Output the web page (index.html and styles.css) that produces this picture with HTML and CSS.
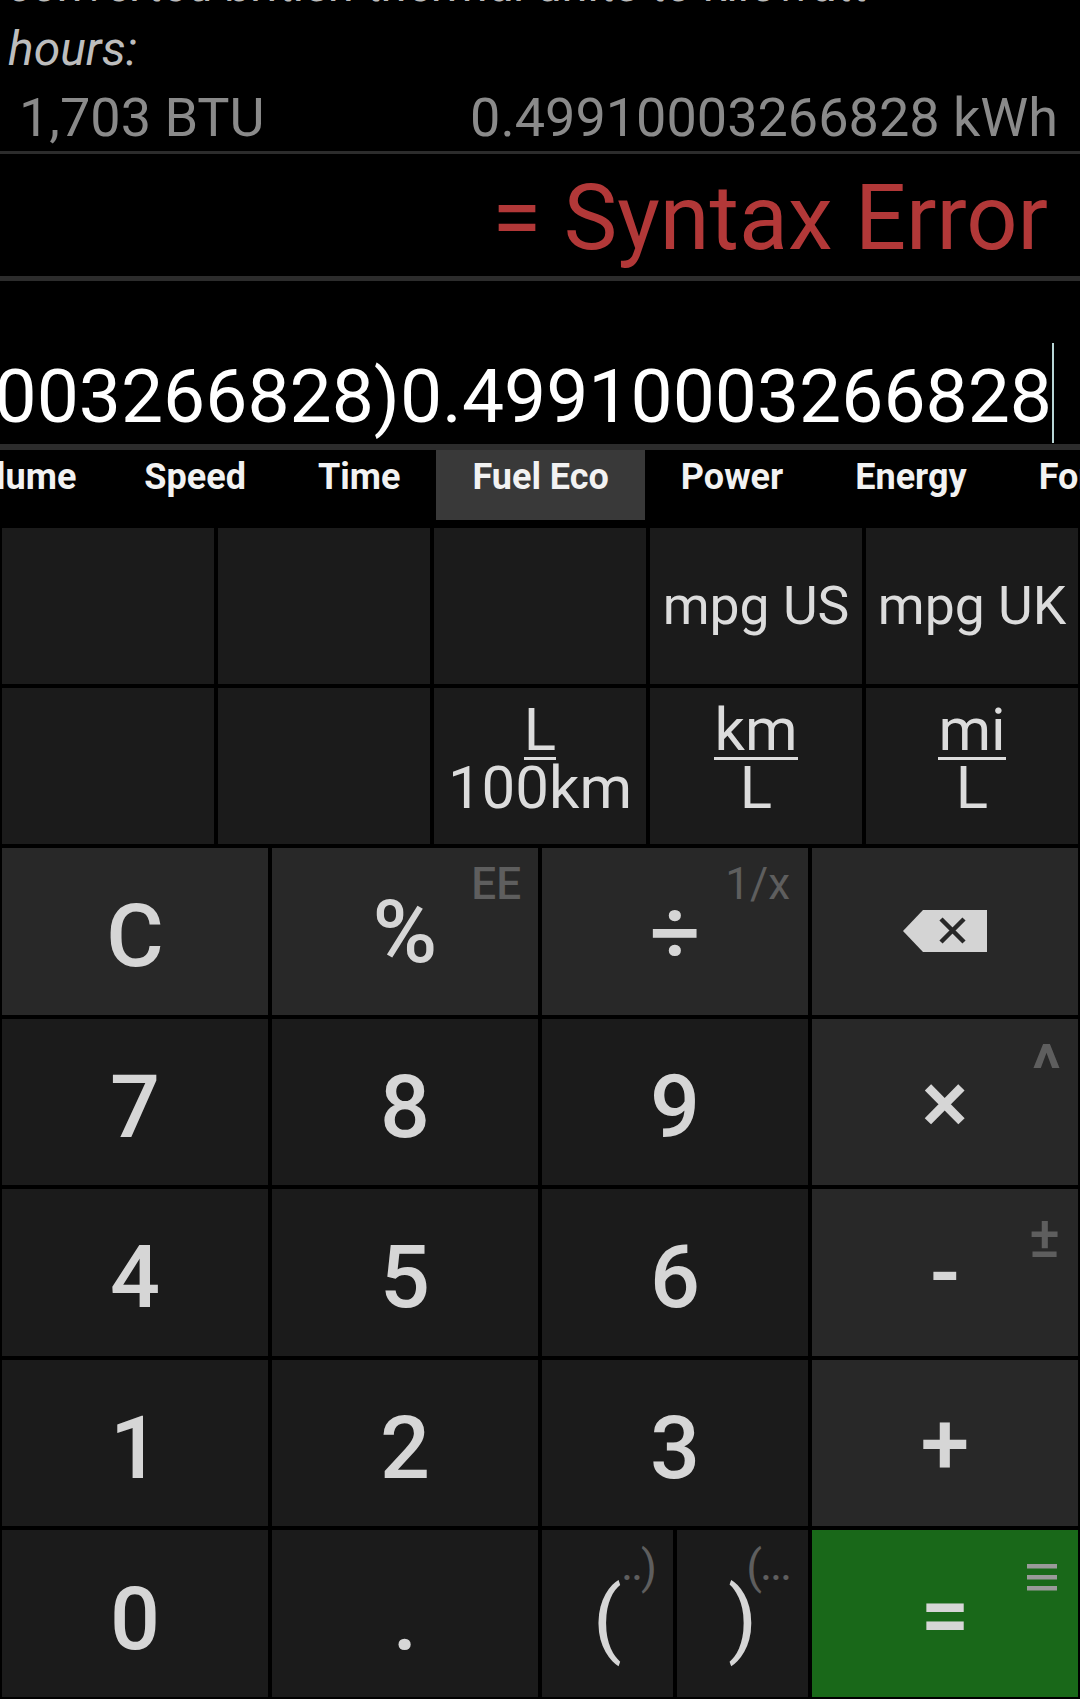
FILE: index.html
```html
<!DOCTYPE html>
<html lang="en">
<head>
<meta charset="utf-8">
<title>Calculator</title>
<link rel="stylesheet" href="styles.css">
</head>
<body>
<div class="app">
  <section class="history">
    <div class="desc">converted british thermal units to kilowatt<br>hours:</div>
    <div class="conv"><span>1,703 BTU</span><span>0.49910003266828 kWh</span></div>
  </section>

  <section class="result"><span class="error">= Syntax Error</span></section>

  <section class="expr">
    <span class="expr-text">1703*0.00029307107017)0.49910003266828)0.49910003266828</span><span class="cursor"></span>
  </section>

  <nav class="tabs">
    <div class="tab tab-first">Volume</div>
    <div class="tab">Speed</div>
    <div class="tab">Time</div>
    <div class="tab tab-active">Fuel Eco</div>
    <div class="tab">Power</div>
    <div class="tab">Energy</div>
    <div class="tab">Force</div>
    <div class="tab">Pressure</div>
  </nav>

  <section class="units">
    <div class="unit"></div>
    <div class="unit"></div>
    <div class="unit"></div>
    <div class="unit">mpg US</div>
    <div class="unit">mpg UK</div>
    <div class="unit"></div>
    <div class="unit"></div>
    <div class="unit unit-frac"><div class="frac"><span class="num">L</span><span class="den">100km</span></div></div>
    <div class="unit unit-frac"><div class="frac"><span class="num">km</span><span class="den">L</span></div></div>
    <div class="unit unit-frac"><div class="frac"><span class="num">mi</span><span class="den">L</span></div></div>
  </section>

  <section class="keypad">
    <div class="key key-op">C</div>
    <div class="key key-op key-sym">%<span class="hint hint-ee">EE</span></div>
    <div class="key key-op key-sym">÷<span class="hint hint-inv">1/x</span></div>
    <div class="key key-op">
      <svg class="bksp" width="84" height="42" viewBox="0 0 84 42">
        <path d="M0 21 L20 0 H84 V42 H20 Z" fill="#d4d4d4"/>
        <path d="M38 9 L61 32 M61 9 L38 32" stroke="#282828" stroke-width="4.5" fill="none"/>
      </svg>
    </div>

    <div class="key">7</div>
    <div class="key">8</div>
    <div class="key">9</div>
    <div class="key key-op key-sym">×<span class="hint hint-pow">^</span></div>

    <div class="key">4</div>
    <div class="key">5</div>
    <div class="key">6</div>
    <div class="key key-op key-sym key-minus">-<span class="hint hint-pm">±</span></div>

    <div class="key">1</div>
    <div class="key">2</div>
    <div class="key">3</div>
    <div class="key key-op key-sym">+</div>

    <div class="key">0</div>
    <div class="key">.</div>
    <div class="key-pair">
      <div class="key key-paren">(<span class="hint hint-paren"><span class="dots">··</span>)</span></div>
      <div class="key key-paren">)<span class="hint hint-paren hint-paren-r">(<span class="dots">···</span></span></div>
    </div>
    <div class="key key-eq key-sym">=
      <svg class="hint-menu" width="30" height="27" viewBox="0 0 30 27">
        <rect x="0" y="0" width="30" height="4.5" fill="#9a9a9a"/>
        <rect x="0" y="11" width="30" height="4.5" fill="#9a9a9a"/>
        <rect x="0" y="22" width="30" height="4.5" fill="#9a9a9a"/>
      </svg>
    </div>
  </section>
</div>
</body>
</html>
```

FILE: styles.css
```css
* {
  box-sizing: border-box;
}

html, body {
  margin: 0;
  padding: 0;
  background: #000;
}

body {
  font-family: Roboto, "Noto Sans", "Liberation Sans", sans-serif;
  color: #ddd;
}

.app {
  width: 1080px;
  height: 1699px;
  display: flex;
  flex-direction: column;
  overflow: hidden;
  background: #000;
}

/* ---------- history ---------- */
.history {
  height: 154px;
  flex: none;
  display: flex;
  flex-direction: column;
  justify-content: flex-end;
  overflow: hidden;
  border-bottom: 3px solid #2c2c2c;
  padding-bottom: 3px;
}

.desc {
  flex: none;
  font-style: italic;
  font-size: 48px;
  line-height: 64px;
  color: #bdbdbd;
  padding-left: 8px;
  white-space: nowrap;
}

.conv {
  flex: none;
  display: flex;
  justify-content: space-between;
  font-size: 54px;
  line-height: 60px;
  color: #8a8a8a;
  padding: 0 22px 0 19px;
  margin-top: 7px;
  white-space: nowrap;
}

/* ---------- result ---------- */
.result {
  height: 127px;
  flex: none;
  display: flex;
  justify-content: flex-end;
  align-items: flex-end;
  border-bottom: 5px solid #2c2c2c;
  padding: 0 32px 12px 0;
}

.error {
  font-size: 90px;
  line-height: 90px;
  color: #b23838;
  white-space: nowrap;
}

/* ---------- expression ---------- */
.expr {
  height: 169px;
  flex: none;
  display: flex;
  justify-content: flex-end;
  align-items: flex-end;
  overflow: hidden;
  border-bottom: 6px solid #2c2c2c;
  padding: 0 26px 1px 0;
}

.expr-text {
  flex: none;
  font-size: 75px;
  line-height: 75px;
  color: #fff;
  white-space: nowrap;
  margin-bottom: 9px;
}

.cursor {
  flex: none;
  width: 2px;
  height: 100px;
  background: #b8d6d6;
}

/* ---------- tabs ---------- */
.tabs {
  height: 76px;
  flex: none;
  display: flex;
  align-items: flex-start;
  overflow: hidden;
  background: #000;
}

.tab {
  flex: none;
  height: 70px;
  padding: 0 36px 16px;
  font-size: 36px;
  font-weight: 700;
  line-height: 54px;
  color: #f2f2f2;
  white-space: nowrap;
}

.tab-first {
  margin-left: -83px;
  padding-right: 32px;
}

.tab-active {
  background: #393939;
}

/* ---------- unit converter ---------- */
.units {
  height: 320px;
  flex: none;
  display: grid;
  grid-template-columns: repeat(5, 1fr);
  grid-template-rows: repeat(2, 1fr);
  gap: 4px;
  padding: 2px;
  background: #000;
}

.unit {
  background: #1b1b1b;
  display: flex;
  align-items: center;
  justify-content: center;
  font-size: 53.5px;
  line-height: 54px;
  color: #dcdcdc;
  white-space: nowrap;
}

.unit-frac {
  padding-bottom: 14px;
}

.frac {
  display: flex;
  flex-direction: column;
  align-items: center;
  font-size: 60px;
  line-height: 54px;
}

.num {
  border-bottom: 3px solid #dcdcdc;
}

.den {
  margin-top: 1px;
}

/* ---------- keypad ---------- */
.keypad {
  flex: 1;
  display: grid;
  grid-template-columns: repeat(4, 1fr);
  grid-template-rows: repeat(5, 1fr);
  gap: 4px;
  padding: 2px;
  background: #000;
}

.key {
  position: relative;
  background: #1b1b1b;
  display: flex;
  align-items: center;
  justify-content: center;
  padding-top: 10px;
  font-size: 88px;
  line-height: 88px;
  font-weight: 500;
  color: #d6d6d6;
}

.key-sym {
  padding-top: 2px;
}

.key-minus {
  padding-top: 0;
}

.key-op {
  background: #282828;
}

.key-eq {
  background: #196819;
}

.key-pair {
  display: grid;
  grid-template-columns: 1fr 1fr;
  gap: 4px;
}

.key-paren {
  font-weight: 400;
  font-size: 84px;
}

.bksp {
  display: block;
  margin-top: -10px;
}

.hint {
  position: absolute;
  color: #5e5e5e;
  font-size: 44px;
  line-height: 44px;
  font-weight: 500;
}

.hint-ee {
  top: 14px;
  right: 17px;
}

.hint-inv {
  top: 14px;
  right: 18px;
  font-weight: 400;
}

.hint-pow {
  top: 18px;
  right: 17px;
  font-size: 66px;
  line-height: 66px;
  font-weight: 700;
}

.hint-pm {
  top: 19px;
  right: 18px;
  font-size: 58px;
  line-height: 58px;
}

.hint-paren {
  top: 14px;
  right: 18px;
  font-size: 46px;
  line-height: 46px;
  font-weight: 400;
  letter-spacing: -2px;
}

.hint-paren-r {
  right: 18px;
}

.dots {
  position: relative;
  top: 11px;
}

.hint-menu {
  position: absolute;
  top: 34px;
  right: 21px;
}
```
